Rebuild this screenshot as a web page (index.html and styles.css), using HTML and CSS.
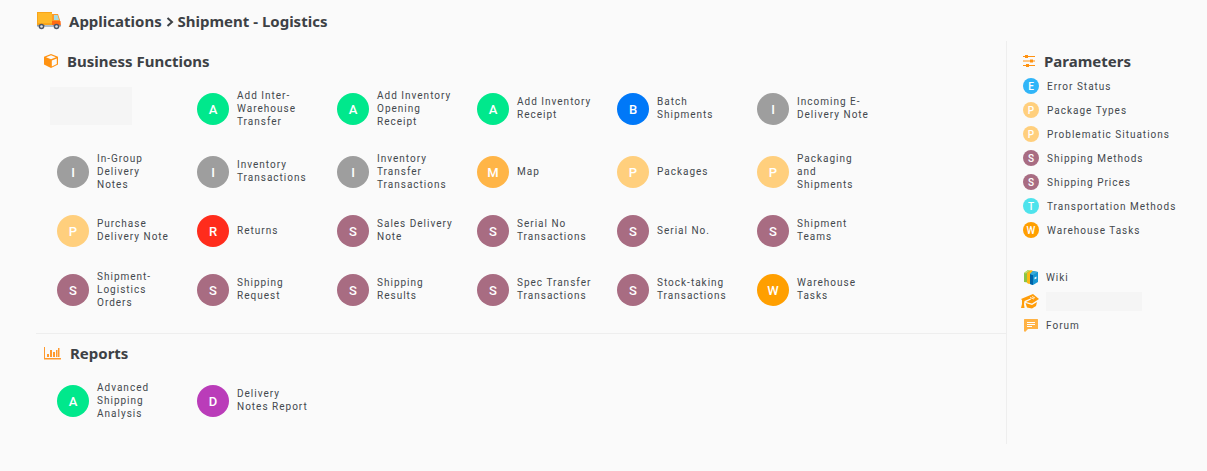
FILE: index.html
```html
<!DOCTYPE html>
<html lang="en">
<head>
<meta charset="utf-8">
<title>Shipment - Logistics</title>
<link rel="stylesheet" href="styles.css">
</head>
<body>
<header class="crumbs">
  <svg class="truck" viewBox="0 0 24 18" aria-hidden="true">
    <path fill="#f8a51b" d="M0 0h15v13H0z"/><path fill="#ffb92a" d="M1 1h14v10H1z"/>
    <path fill="#fc9a28" d="M15 2h6l2 6v6h-8z"/><path fill="#ff6a13" d="M15 9h8.500l.5 5h-9z"/>
    <path fill="#a6dbe3" d="M17 3h3.500l1.500 5h-5z"/>
    <path fill="#8e9aaa" d="M0 13h24v1.500H0z"/><path fill="#aebdcc" d="M8 13h8v2H8z"/>
    <circle cx="4.500" cy="14.500" r="2.800" fill="#4c5665"/><circle cx="4.500" cy="14.500" r="1.300" fill="#dde3ea"/>
    <circle cx="19.500" cy="14.500" r="2.800" fill="#4c5665"/><circle cx="19.500" cy="14.500" r="1.300" fill="#dde3ea"/>
  </svg>
  <h1 class="title"><a href="#">Applications</a>
    <svg class="chevron" viewBox="0 0 8 10" aria-label="&gt;"><path d="M1.500 1L6 5 1.500 9" fill="none" stroke="currentColor" stroke-width="2"/></svg>
    Shipment - Logistics</h1>
</header>
<div class="layout">
  <main class="main">
    <section class="section functions">
      <h2 class="title heading">
        <svg class="cube" viewBox="0 0 14 14" aria-hidden="true"><path fill="#ff9211" fill-rule="evenodd" d="M7 0l7 2.700v7.800L7 14 0 10.500V2.700zM7 1.200L2 3.200l5 2 5-2zM7.800 6.600v5.800l5-2.500V4.600z"/></svg>
        Business Functions</h2>
      <nav class="grid" aria-label="Business Functions">
        <div class="blank"></div>
        <a class="tile" href="#"><span class="dot green">A</span><span class="label">Add Inter-Warehouse Transfer</span></a>
        <a class="tile" href="#"><span class="dot green">A</span><span class="label">Add Inventory Opening Receipt</span></a>
        <a class="tile" href="#"><span class="dot green">A</span><span class="label">Add Inventory Receipt</span></a>
        <a class="tile" href="#"><span class="dot blue">B</span><span class="label">Batch Shipments</span></a>
        <a class="tile" href="#"><span class="dot gray">I</span><span class="label">Incoming E-Delivery Note</span></a>
        <a class="tile" href="#"><span class="dot gray">I</span><span class="label">In-Group Delivery Notes</span></a>
        <a class="tile" href="#"><span class="dot gray">I</span><span class="label">Inventory Transactions</span></a>
        <a class="tile" href="#"><span class="dot gray">I</span><span class="label">Inventory Transfer Transactions</span></a>
        <a class="tile" href="#"><span class="dot amber">M</span><span class="label">Map</span></a>
        <a class="tile" href="#"><span class="dot sand">P</span><span class="label">Packages</span></a>
        <a class="tile" href="#"><span class="dot sand">P</span><span class="label">Packaging and Shipments</span></a>
        <a class="tile" href="#"><span class="dot sand">P</span><span class="label">Purchase Delivery Note</span></a>
        <a class="tile" href="#"><span class="dot red">R</span><span class="label">Returns</span></a>
        <a class="tile" href="#"><span class="dot mauve">S</span><span class="label">Sales Delivery Note</span></a>
        <a class="tile" href="#"><span class="dot mauve">S</span><span class="label">Serial No Transactions</span></a>
        <a class="tile" href="#"><span class="dot mauve">S</span><span class="label">Serial No.</span></a>
        <a class="tile" href="#"><span class="dot mauve">S</span><span class="label">Shipment Teams</span></a>
        <a class="tile" href="#"><span class="dot mauve">S</span><span class="label">Shipment-Logistics Orders</span></a>
        <a class="tile" href="#"><span class="dot mauve">S</span><span class="label">Shipping Request</span></a>
        <a class="tile" href="#"><span class="dot mauve">S</span><span class="label">Shipping Results</span></a>
        <a class="tile" href="#"><span class="dot mauve">S</span><span class="label">Spec Transfer Transactions</span></a>
        <a class="tile" href="#"><span class="dot mauve">S</span><span class="label">Stock-taking Transactions</span></a>
        <a class="tile" href="#"><span class="dot orange">W</span><span class="label">Warehouse Tasks</span></a>
      </nav>
    </section>
    <section class="section reports">
      <h2 class="title heading">
        <svg class="chart" viewBox="0 0 17 13" aria-hidden="true"><path fill="#ff9a2e" d="M0 0h1v11h16v1.500H0zM3 7h2v3H3zM6 3h2v7H6zM9 5h2v5H9zM12 3h1.500v7H12zM14 1h1.500v9H14z"/></svg>
        Reports</h2>
      <nav class="grid" aria-label="Reports">
        <a class="tile" href="#"><span class="dot green">A</span><span class="label">Advanced Shipping Analysis</span></a>
        <a class="tile" href="#"><span class="dot purple">D</span><span class="label">Delivery Notes Report</span></a>
      </nav>
    </section>
  </main>
  <aside class="side">
    <h2 class="title heading">
      <svg class="sliders" viewBox="0 0 12 12" aria-hidden="true"><path fill="#ff9211" d="M0 1h12v1H0zM0 5.500h12v1H0zM0 10h12v1H0zM2 0h3v3H2zM7 4.500h3v3H7zM3 9h3v3H3z"/></svg>
      Parameters</h2>
    <nav class="params" aria-label="Parameters">
      <a class="param" href="#"><span class="dot small sky">E</span>Error Status</a>
      <a class="param" href="#"><span class="dot small sand">P</span>Package Types</a>
      <a class="param" href="#"><span class="dot small sand">P</span>Problematic Situations</a>
      <a class="param" href="#"><span class="dot small mauve">S</span>Shipping Methods</a>
      <a class="param" href="#"><span class="dot small mauve">S</span>Shipping Prices</a>
      <a class="param" href="#"><span class="dot small cyan">T</span>Transportation Methods</a>
      <a class="param" href="#"><span class="dot small orange">W</span>Warehouse Tasks</a>
    </nav>
    <nav class="help" aria-label="Help">
      <a class="helplink" href="#">
        <svg class="helpicon" viewBox="0 0 18 16" aria-hidden="true"><path fill="#8cc544" d="M3 4l4-3 3 1v12l-7-1z"/><path fill="#c7dc68" d="M3 4l4-3 2 .5L5 4.500z"/><path fill="#fdb913" d="M6 4l4-3 2 1v12l-4 1-2-1z"/><path fill="#1796d2" d="M9 5l3-3 5 1v10l-5 3-3-1z"/><path fill="#0062a6" d="M9 5l3 1v10l-3-1z"/><path fill="#3aa9d8" d="M9 5l3-3 5 1-5 3z"/><path fill="#eaf8ff" d="M13.500 8.500l2-1v2l-2 1z"/></svg>
        Wiki</a>
      <div class="helplink">
        <svg class="helpicon" viewBox="0 0 18 16" aria-hidden="true"><path fill="#ff9d0a" d="M0 6l12-5 6 5-7 4.500-6-1.500 5-2.500-.5-1L3.500 8l-.5 3L3.500 15H0l1-4V7zM4.500 10l6.500 2 5-3-1 4-4 2.500L6 14.500z"/><path d="M9 4.500l4 1.500M11 3.500l3 1.500" stroke="#fff" stroke-width=".8"/></svg>
        <span class="blankline"></span></div>
      <a class="helplink" href="#">
        <svg class="helpicon" viewBox="0 0 18 16" aria-hidden="true"><path fill="#ffb244" d="M3.500 2H16.500l.5.500V12H7l-3 3-1-1V2.500z"/><path stroke="#fff" d="M6 5.500h8M6 7.500h8M6 9.500h5"/></svg>
        Forum</a>
    </nav>
  </aside>
</div>
</body>
</html>
```
FILE: styles.css
```css
* { box-sizing: border-box; }
body {
  margin: 0;
  padding: 10px 16px 26px 36px;
  background: #fafafa;
  color: #43484d;
  font: 10px/13px Roboto, sans-serif;
  letter-spacing: 1px;
}
a { color: inherit; text-decoration: none; }
.title {
  margin: 0;
  font: 700 15px/22px "Noto Sans", sans-serif;
  letter-spacing: normal;
  color: #3d4145;
}
.crumbs { display: flex; align-items: center; gap: 8px; height: 22px; padding-left: 1px; }
.truck { width: 24px; height: 18px; }
.chevron { width: 8px; height: 10px; }
.layout { display: flex; margin-top: 9px; }
.main { flex: 1; }
.section { padding: 9px 8px 0; }
.functions { padding-bottom: 23px; border-bottom: 1px solid #eee; }
.heading { display: flex; align-items: center; gap: 9px; }
.cube { width: 14px; height: 14px; }
.chart { width: 17px; height: 13px; }
.sliders { width: 12px; height: 12px; }
.grid {
  display: grid;
  grid-template-columns: repeat(auto-fill, 140px);
  grid-auto-rows: 40px;
  row-gap: 19px;
  width: 100%;
  max-width: 860px;
  padding-left: 13px;
}
.functions .grid { grid-template-rows: 48px; margin-top: 13px; }
.reports .grid { margin-top: 17px; }
.tile { display: flex; align-items: center; gap: 8px; }
.label { width: 78px; margin-bottom: 2px; }
.blank { width: 82px; height: 38px; margin: 2px 0 0 -7px; background: #f5f5f5; }
.dot {
  display: flex;
  flex: none;
  align-items: center;
  justify-content: center;
  width: 32px;
  height: 32px;
  border-radius: 50%;
  color: #fff;
  font-size: 13px;
  font-weight: 500;
  letter-spacing: normal;
}
.small { width: 16px; height: 16px; font-size: 10px; }
.green { background: #00e88c; }
.blue { background: #0078f8; }
.gray { background: #9e9e9e; }
.amber { background: #ffb547; }
.sand { background: #ffcf7d; }
.red { background: #ff2c1c; }
.mauve { background: #a86c82; }
.orange { background: #ff9f00; }
.purple { background: #ba3cb9; }
.sky { background: #30b5f8; }
.cyan { background: #4ee3ec; }
.reports { padding-top: 8px; padding-bottom: 23px; }
.side { width: 185px; padding: 9px 0 0 16px; border-left: 1px solid #eee; }
.params { display: flex; flex-direction: column; gap: 8px; margin-top: 6px; }
.param { display: flex; align-items: center; gap: 8px; height: 16px; white-space: nowrap; }
.help { display: flex; flex-direction: column; gap: 8px; margin: 31px 0 0 -2px; }
.helplink { display: flex; align-items: center; gap: 7px; height: 16px; }
.helpicon { width: 18px; height: 16px; }
.blankline { width: 96px; height: 19px; background: #f5f5f5; }
```
